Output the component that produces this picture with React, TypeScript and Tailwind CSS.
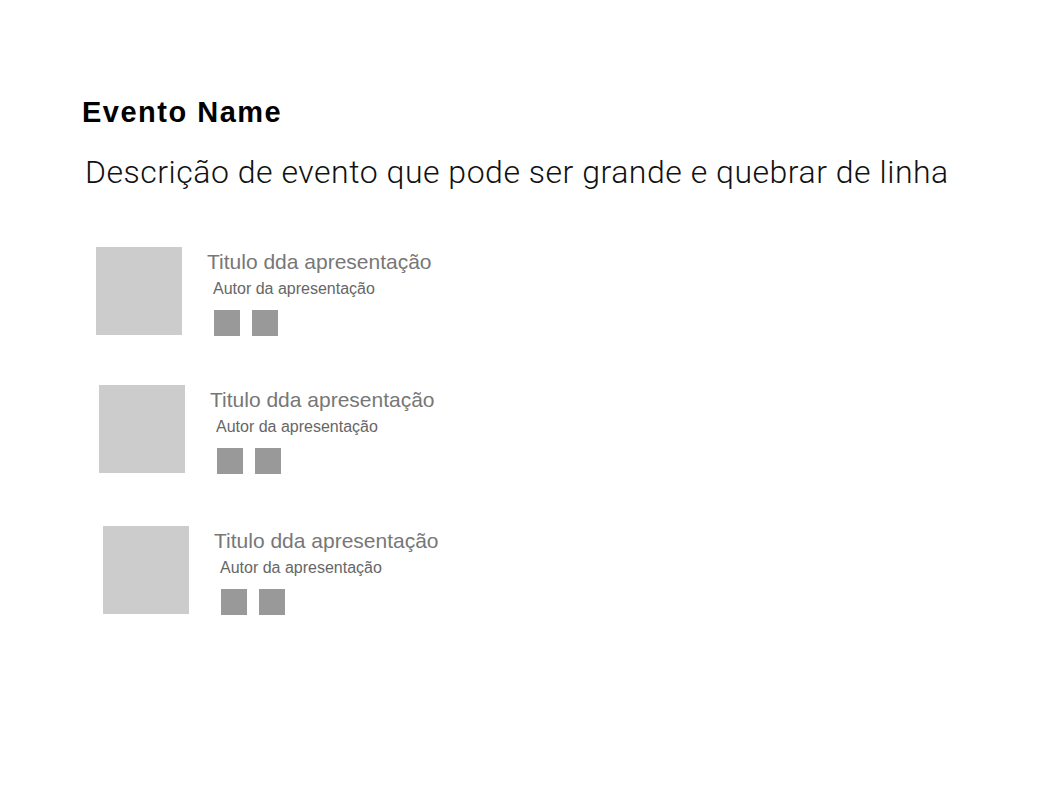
import React from 'react';

type Talk = { title: string; author: string; offset: string; gap: string };

const talks: Talk[] = [
  { title: 'Titulo dda apresentação', author: 'Autor da apresentação', offset: 'ml-[96px]', gap: 'mt-[55px]' },
  { title: 'Titulo dda apresentação', author: 'Autor da apresentação', offset: 'ml-[99px]', gap: 'mt-[49px]' },
  { title: 'Titulo dda apresentação', author: 'Autor da apresentação', offset: 'ml-[103px]', gap: 'mt-[52px]' },
];

const TalkRow: React.FC<{ talk: Talk }> = ({ talk }) => (
  <div className={`flex items-start ${talk.offset} ${talk.gap}`}>
    <div className="w-[86px] h-[88px] bg-[#cccccc] shrink-0" />
    <div className="ml-[25px] mt-[3px] flex flex-col">
      <p className="text-[21px] leading-[24px] text-[#777777]">{talk.title}</p>
      <p className="ml-[6px] mt-[5px] text-[16px] leading-[20px] text-[#666666]">{talk.author}</p>
      <div className="ml-[7px] mt-[11px] flex gap-3">
        <div className="w-[26px] h-[26px] bg-[#999999]" />
        <div className="w-[26px] h-[26px] bg-[#999999]" />
      </div>
    </div>
  </div>
);

export default function App() {
  return (
    <div className="w-[1058px] h-[788px] bg-white font-['Liberation_Sans',Arial,sans-serif]">
      <div className="pt-[94px]">
        <h1 className="ml-[82px] text-[29px] leading-[36px] font-bold tracking-[1.5px] text-[#000000]">
          Evento Name
        </h1>
        <p className="ml-[85px] mt-[22px] font-['Roboto',sans-serif] font-light text-[32px] leading-[40px] tracking-[0.52px] text-[#111111]">
          Descrição de evento que pode ser grande e quebrar de linha
        </p>
        {talks.map((talk, i) => (
          <TalkRow key={i} talk={talk} />
        ))}
      </div>
    </div>
  );
}
